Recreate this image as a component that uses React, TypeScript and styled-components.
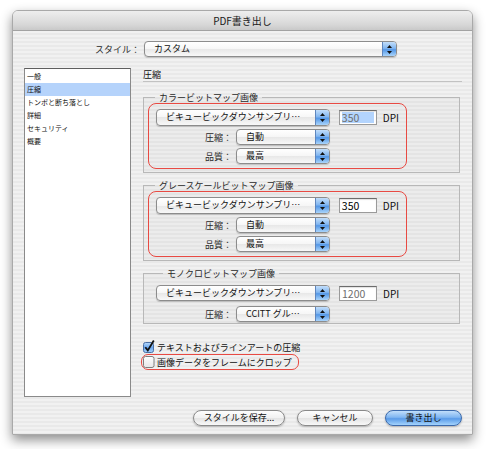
import styled, { createGlobalStyle } from "styled-components";

const GlobalStyle = createGlobalStyle`
  html, body {
    margin: 0;
    padding: 0;
    background: #ffffff;
  }
  body {
    font-family: "Noto Sans CJK JP", "Noto Sans", sans-serif;
    color: #111;
  }
`;

const pinstripe = `repeating-linear-gradient(
  to bottom,
  #f1f1f1 0px,
  #f1f1f1 2px,
  #e9e9e9 2px,
  #e9e9e9 4px
)`;

const Desktop = styled.div`
  width: 486px;
  height: 449px;
  box-sizing: border-box;
  padding: 10px 0 0 12px;
`;

const Window = styled.div`
  width: 461px;
  height: 425px;
  box-sizing: border-box;
  border: 1px solid #a9a9a9;
  border-radius: 6px 6px 0 0;
  box-shadow: 0 5px 12px rgba(0, 0, 0, 0.45);
  background: ${pinstripe};
  display: flex;
  flex-direction: column;
  overflow: hidden;
`;

const TitleBar = styled.div`
  height: 19px;
  line-height: 19px;
  text-align: center;
  font-size: 10px;
  color: #1a1a1a;
  background: linear-gradient(#eeeeee, #d8d8d8 70%, #c9c9c9);
  border-bottom: 1px solid #a2a2a2;
`;

const Body = styled.div`
  padding: 10px 10px 0 11px;
  display: flex;
  flex-direction: column;
`;

const StyleRow = styled.div`
  display: flex;
  align-items: center;
  height: 16px;
`;

const RowLabel = styled.span<{ $width: number }>`
  width: ${(p) => p.$width}px;
  margin-right: 4px;
  text-align: right;
  font-size: 9px;
  color: #2a2a2a;
  white-space: nowrap;
`;

const Popup = styled.div<{ $width: number; $height?: number }>`
  width: ${(p) => p.$width}px;
  height: ${(p) => p.$height ?? 16}px;
  box-sizing: border-box;
  display: flex;
  align-items: stretch;
  border: 1px solid #8c8c8c;
  border-radius: 4px;
  background: linear-gradient(#ffffff, #f6f6f6 50%, #e7e7e7 50%, #f8f8f8);
  box-shadow: 0 1px 1px rgba(0, 0, 0, 0.18);
  overflow: hidden;
`;

const PopupText = styled.span`
  flex: 1;
  padding-left: 9px;
  font-size: 9px;
  line-height: 14px;
  white-space: nowrap;
  overflow: hidden;
`;

const PopupArrow = styled.span`
  width: 13px;
  display: flex;
  align-items: center;
  justify-content: center;
  border-left: 1px solid #5f86bd;
  background: linear-gradient(#c2defb, #82b6f0 45%, #5497e6 55%, #a9d4fb);
`;

const Main = styled.div`
  margin-top: 11px;
  display: flex;
  gap: 12px;
`;

const Sidebar = styled.div`
  width: 107px;
  height: 329px;
  box-sizing: border-box;
  border: 1px solid #8a8a8a;
  border-top-color: #5e5e5e;
  background: #ffffff;
  padding-top: 1px;
`;

const SidebarItem = styled.div<{ $selected?: boolean }>`
  height: 13px;
  line-height: 13px;
  padding-left: 2px;
  font-size: 7px;
  white-space: nowrap;
  background: ${(p) => (p.$selected ? "#b5d3fb" : "transparent")};
`;

const Panel = styled.div`
  width: 319px;
  display: flex;
  flex-direction: column;
`;

const PanelHeading = styled.div`
  height: 13px;
  line-height: 13px;
  font-size: 9px;
  border-bottom: 1px solid #c2c2c2;
`;

const Group = styled.fieldset<{ $top: number; $pad: string }>`
  margin: ${(p) => p.$top}px 2px 0 0;
  padding: ${(p) => p.$pad};
  min-width: 0;
  border: 1px solid #b8b8b8;
  background: rgba(0, 0, 0, 0.02);
`;

const Legend = styled.legend`
  margin-left: 7px;
  padding: 0 4px;
  font-size: 9px;
  line-height: 11px;
  color: #2a2a2a;
`;

const Highlight = styled.div`
  width: 259px;
  box-sizing: border-box;
  border: 1.5px solid #e84a43;
  border-radius: 8px;
  padding: 5px 7px 4px;
`;

const Rows = styled.div<{ $gap: number }>`
  display: flex;
  flex-direction: column;
  gap: ${(p) => p.$gap}px;
`;

const Row = styled.div`
  display: flex;
  align-items: center;
`;

const Field = styled.div<{ $dim?: boolean }>`
  width: 38px;
  height: 15px;
  flex-shrink: 0;
  box-sizing: border-box;
  margin-left: 9px;
  padding: 1px 2px;
  border: 1px solid #9a9a9a;
  border-top-color: #6c6c6c;
  background: #ffffff;
  box-shadow: inset 0 1px 1px rgba(0, 0, 0, 0.12);
  font-size: 10.5px;
  line-height: 11px;
  color: ${(p) => (p.$dim ? "#6e6e6e" : "#000")};
`;

const FieldValue = styled.span<{ $selected?: boolean }>`
  display: block;
  height: 11px;
  background: ${(p) => (p.$selected ? "#b3d4fd" : "transparent")};
`;

const Unit = styled.span`
  margin-left: 6px;
  font-size: 10px;
`;

const CheckRow = styled.div<{ $top: number }>`
  margin-top: ${(p) => p.$top}px;
  display: flex;
  align-items: center;
  height: 12px;
`;

const CheckOutline = styled.div`
  margin-top: 1px;
  margin-left: -2px;
  align-self: flex-start;
  display: flex;
  align-items: center;
  height: 16px;
  box-sizing: border-box;
  padding: 0 6px 0 1px;
  border: 1.5px solid #e84a43;
  border-radius: 7px;
`;

const CheckLabel = styled.span`
  margin-left: 2px;
  font-size: 9px;
  white-space: nowrap;
`;

const Footer = styled.div`
  margin-top: 13px;
  display: flex;
  justify-content: flex-end;
  gap: 12px;
`;

const Button = styled.div<{ $width: number; $default?: boolean }>`
  width: ${(p) => p.$width}px;
  height: 16px;
  box-sizing: border-box;
  border: 1px solid ${(p) => (p.$default ? "#3b69ab" : "#8a8a8a")};
  border-radius: 9px;
  background: ${(p) =>
    p.$default
      ? "linear-gradient(#c1defb, #80b6f1 45%, #5a9be8 55%, #a3d3fd)"
      : "linear-gradient(#fdfdfd, #f1f1f1 50%, #e3e3e3 50%, #f8f8f8)"};
  box-shadow: 0 1px 2px rgba(0, 0, 0, 0.25);
  font-size: 9px;
  line-height: 14px;
  text-align: center;
  white-space: nowrap;
`;

const Arrows = () => (
  <svg width="7" height="11" viewBox="0 0 7 11">
    <path d="M3.5 1 L6 4 L1 4 Z" fill="#111" />
    <path d="M1 7 L6 7 L3.5 10 Z" fill="#111" />
  </svg>
);

const Select = ({ width, text, height }: { width: number; text: string; height?: number }) => (
  <Popup $width={width} $height={height}>
    <PopupText>{text}</PopupText>
    <PopupArrow>
      <Arrows />
    </PopupArrow>
  </Popup>
);

const Check = ({ checked }: { checked?: boolean }) =>
  checked ? (
    <svg width="12" height="12" viewBox="0 0 12 12" style={{ overflow: "visible" }}>
      <defs>
        <linearGradient id="cbfill" x1="0" y1="0" x2="0" y2="1">
          <stop offset="0" stopColor="#b8dafc" />
          <stop offset="0.5" stopColor="#6aa6ee" />
          <stop offset="1" stopColor="#a6d2fb" />
        </linearGradient>
      </defs>
      <rect x="0.5" y="1.5" width="10" height="10" rx="2" fill="url(#cbfill)" stroke="#4a6fa5" />
      <path d="M2.3 6.3 L4.8 9.4 L10.8 -0.5" fill="none" stroke="#111" strokeWidth="1.8" />
    </svg>
  ) : (
    <svg width="12" height="12" viewBox="0 0 12 12">
      <defs>
        <linearGradient id="cbempty" x1="0" y1="0" x2="0" y2="1">
          <stop offset="0" stopColor="#ffffff" />
          <stop offset="1" stopColor="#e6e6e6" />
        </linearGradient>
      </defs>
      <rect x="0.5" y="0.5" width="10.5" height="11" rx="2" fill="url(#cbempty)" stroke="#7e7e7e" />
    </svg>
  );

type SamplingProps = { title: string; dpi: string; selected?: boolean; top: number };

const SamplingGroup = ({ title, dpi, selected, top }: SamplingProps) => (
  <Group $top={top} $pad="0 4px 3px">
    <Legend>{title}</Legend>
    <Highlight>
      <Rows $gap={3}>
        <Row>
          <Select width={174} height={17} text="ビキュービックダウンサンプリ…" />
          <Field $dim={selected}>
            <FieldValue $selected={selected}>{dpi}</FieldValue>
          </Field>
          <Unit>DPI</Unit>
        </Row>
        <Row>
          <RowLabel $width={76}>圧縮：</RowLabel>
          <Select width={94} text="自動" />
        </Row>
        <Row>
          <RowLabel $width={76}>品質：</RowLabel>
          <Select width={94} text="最高" />
        </Row>
      </Rows>
    </Highlight>
  </Group>
);

const sections = ["一般", "圧縮", "トンボと断ち落とし", "詳細", "セキュリティ", "概要"];

export default function App() {
  return (
    <Desktop>
      <GlobalStyle />
      <Window>
        <TitleBar>PDF書き出し</TitleBar>
        <Body>
          <StyleRow>
            <RowLabel $width={116}>スタイル：</RowLabel>
            <Select width={253} text="カスタム" />
          </StyleRow>
          <Main>
            <Sidebar>
              {sections.map((s) => (
                <SidebarItem key={s} $selected={s === "圧縮"}>
                  {s}
                </SidebarItem>
              ))}
            </Sidebar>
            <Panel>
              <PanelHeading>圧縮</PanelHeading>
              <SamplingGroup title="カラービットマップ画像" dpi="350" selected top={10} />
              <SamplingGroup title="グレースケールビットマップ画像" dpi="350" top={7} />
              <Group $top={7} $pad="6px 4px 1px 12px">
                <Legend>モノクロビットマップ画像</Legend>
                <Rows $gap={5}>
                  <Row>
                    <Select width={174} text="ビキュービックダウンサンプリ…" />
                    <Field $dim>
                      <FieldValue>1200</FieldValue>
                    </Field>
                    <Unit>DPI</Unit>
                  </Row>
                  <Row>
                    <RowLabel $width={76}>圧縮：</RowLabel>
                    <Select width={94} text="CCITT グル…" />
                  </Row>
                </Rows>
              </Group>
              <CheckRow $top={17}>
                <Check checked />
                <CheckLabel>テキストおよびラインアートの圧縮</CheckLabel>
              </CheckRow>
              <CheckOutline>
                <Check />
                <CheckLabel>画像データをフレームにクロップ</CheckLabel>
              </CheckOutline>
            </Panel>
          </Main>
          <Footer>
            <Button $width={92}>スタイルを保存...</Button>
            <Button $width={76}>キャンセル</Button>
            <Button $width={77} $default>
              書き出し
            </Button>
          </Footer>
        </Body>
      </Window>
    </Desktop>
  );
}
